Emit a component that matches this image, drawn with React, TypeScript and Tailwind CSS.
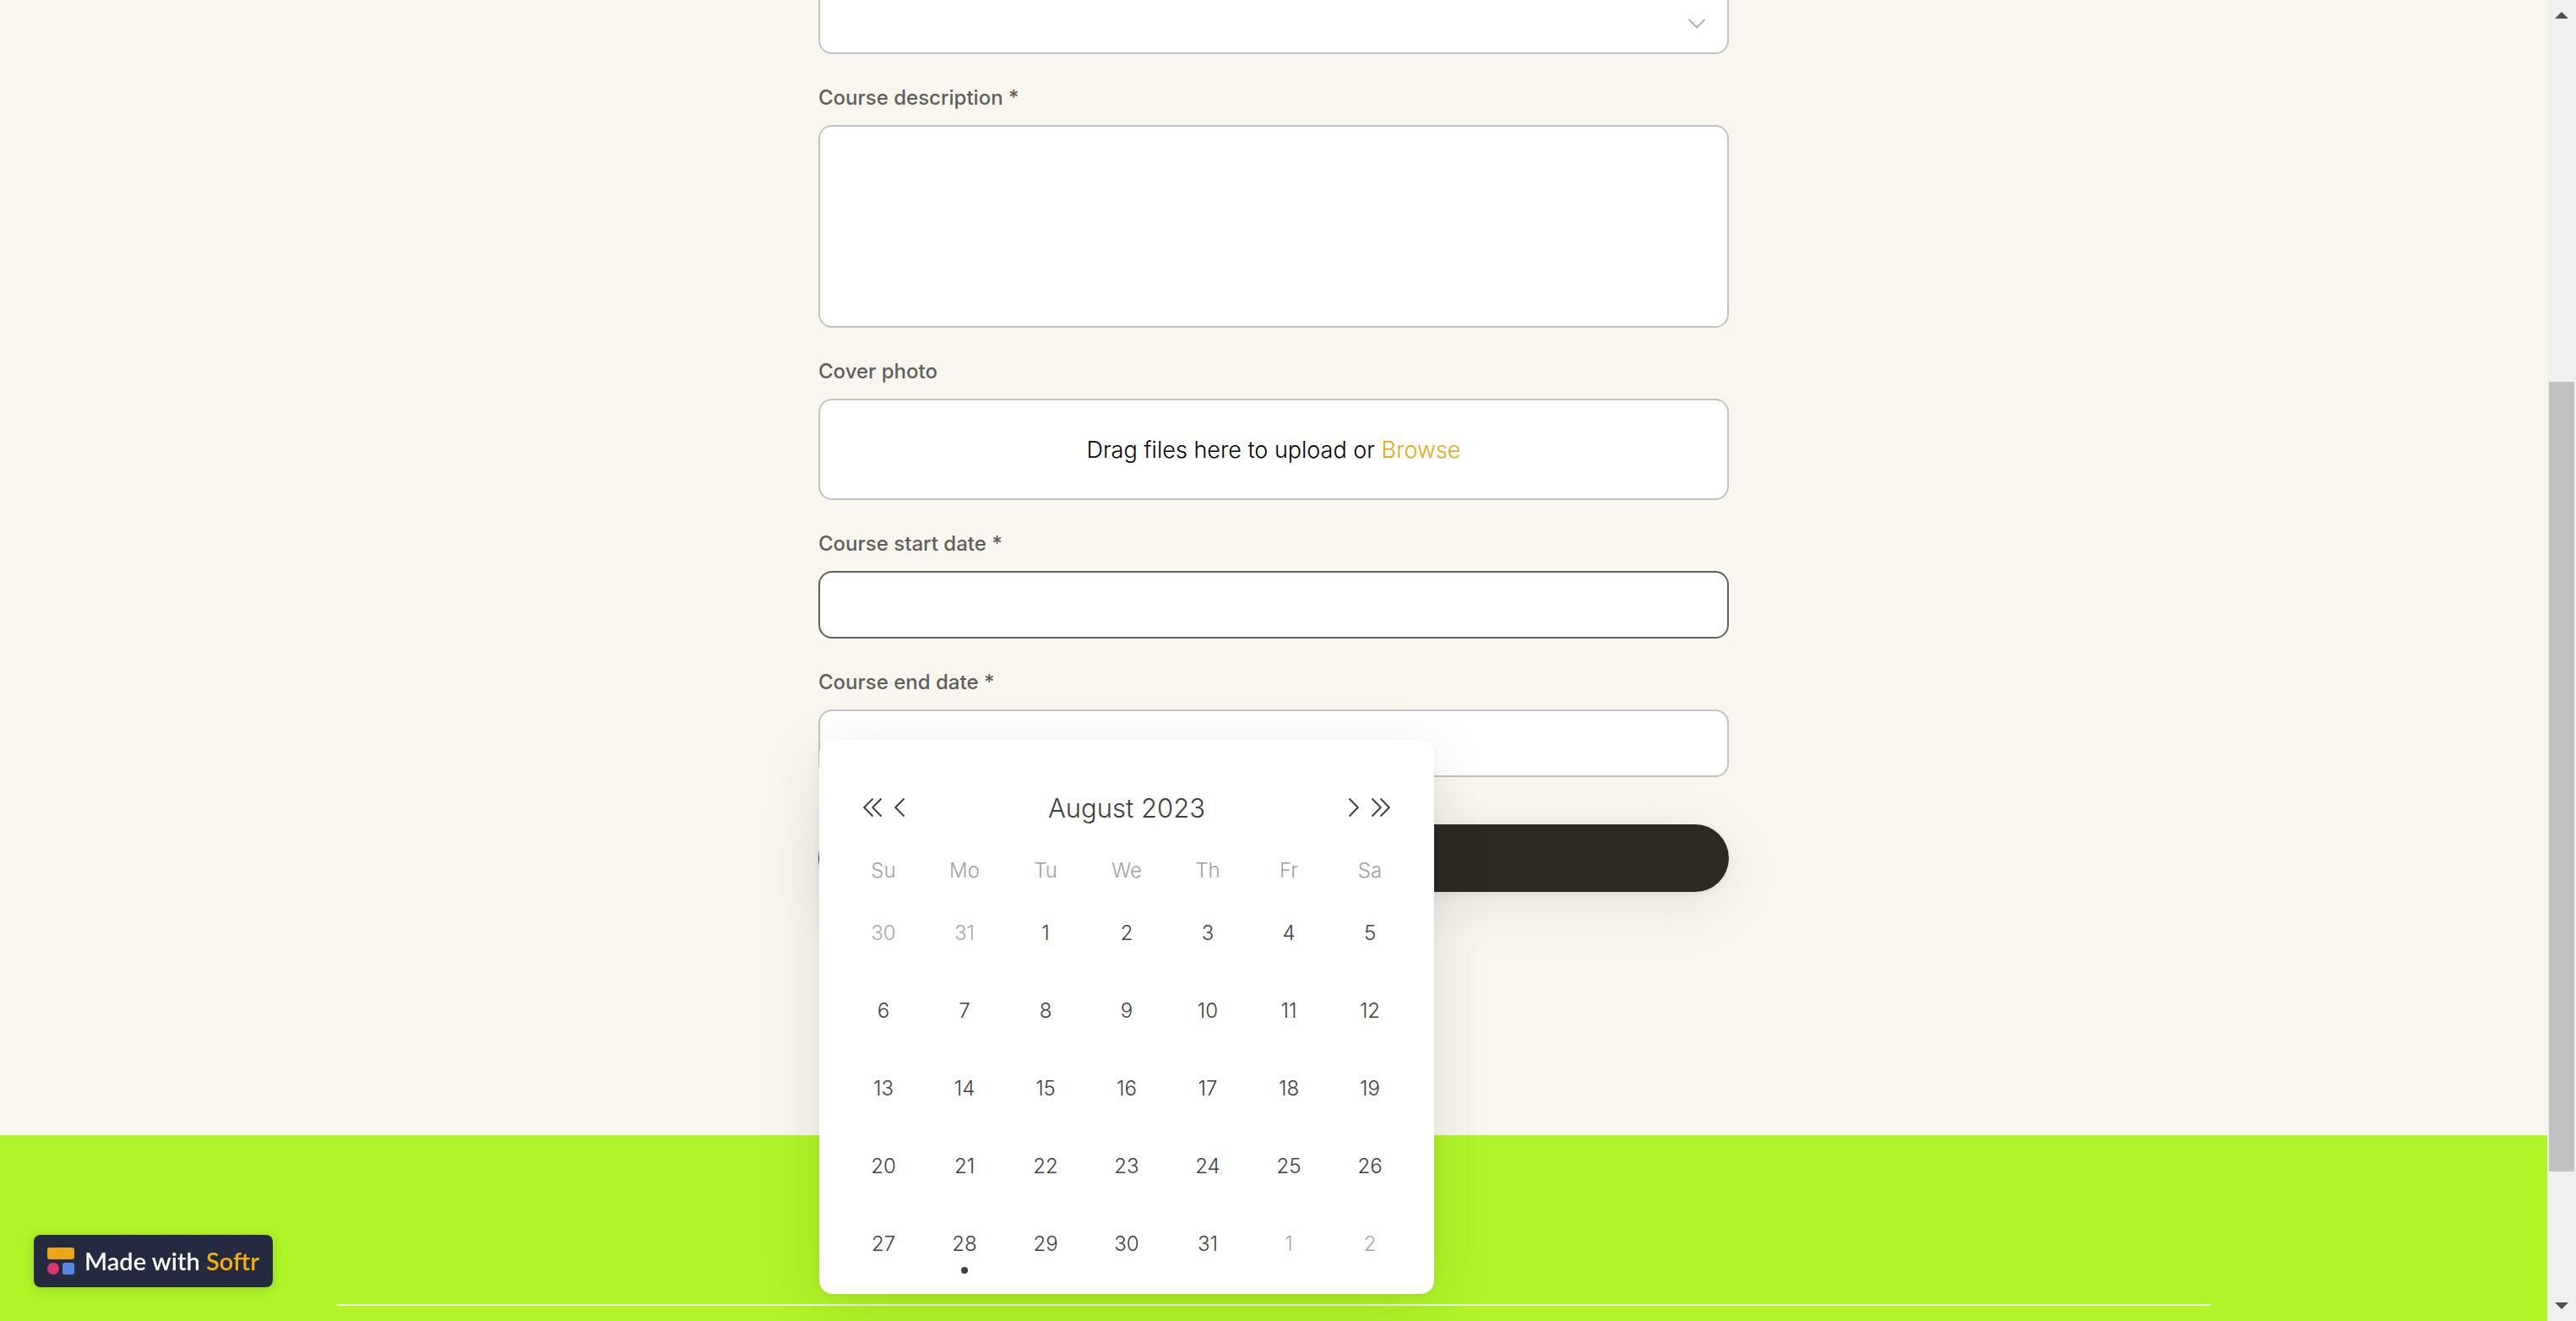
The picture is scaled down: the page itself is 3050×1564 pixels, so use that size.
import React from "react";

const WEEKDAYS = ["Su", "Mo", "Tu", "We", "Th", "Fr", "Sa"];
const WEEKS = [
  [30, 31, 1, 2, 3, 4, 5],
  [6, 7, 8, 9, 10, 11, 12],
  [13, 14, 15, 16, 17, 18, 19],
  [20, 21, 22, 23, 24, 25, 26],
  [27, 28, 29, 30, 31, 1, 2],
];
const TODAY = 28;

const boxStyle = "block w-full rounded-2xl border-2 bg-white outline-none";

function Field({ id, label, children }: { id: string; label: string; children: React.ReactNode }) {
  return (
    <div className="relative pt-8">
      <label htmlFor={id} className="mb-3 block text-2xl leading-10 font-medium text-[#5f5f5f]">
        {label}
      </label>
      {children}
    </div>
  );
}

function Chevrons({ double, right }: { double?: boolean; right?: boolean }) {
  const width = double ? 22 : 12;
  return (
    <svg
      width={width}
      height="22"
      viewBox={`0 0 ${width} 22`}
      fill="none"
      stroke="#404040"
      strokeWidth="2"
      className={right ? "rotate-180" : ""}
      aria-hidden="true"
    >
      <path d="M11.5 0.5 1.2 11l10.3 10.5" />
      {double && <path d="M21.5 0.5 11.2 11l10.3 10.5" />}
    </svg>
  );
}

function Calendar() {
  return (
    <div
      role="dialog"
      aria-label="Choose date"
      className="absolute top-[284px] left-px z-10 w-[728px] rounded-2xl bg-white px-7 pt-[34px] pb-[14px] text-[#404040] shadow-[0_16px_72px_rgba(0,0,0,0.1),0_2px_10px_rgba(0,0,0,0.04)]"
    >
      <div className="flex h-[92px] items-center justify-between px-6">
        <div className="flex gap-[15px]">
          <button type="button" aria-label="Previous year"><Chevrons double /></button>
          <button type="button" aria-label="Previous month"><Chevrons /></button>
        </div>
        <h2 className="pt-0.5 text-[31px] leading-10 font-light">August 2023</h2>
        <div className="flex gap-[15px]">
          <button type="button" aria-label="Next month"><Chevrons right /></button>
          <button type="button" aria-label="Next year"><Chevrons double right /></button>
        </div>
      </div>
      <table className="w-full table-fixed border-collapse text-center text-2xl">
        <thead>
          <tr className="h-14 text-[#a0a0a0]">
            {WEEKDAYS.map((d) => (
              <th key={d} scope="col" className="p-0 pt-0.5 font-light">{d}</th>
            ))}
          </tr>
        </thead>
        <tbody>
          {WEEKS.map((week, w) => (
            <tr key={w} className="h-[92px]">
              {week.map((day) => {
                const outside = (w === 0 && day > 7) || (w === 4 && day < 7);
                return (
                  <td key={day} className="p-0">
                    <button
                      type="button"
                      className={`relative h-[92px] w-full pt-0.5 align-top font-light ${outside ? "text-[#a9a9ad]" : ""}`}
                    >
                      {day}
                      {day === TODAY && (
                        <span className="absolute bottom-[10px] left-1/2 size-2 -translate-x-1/2 rounded-full bg-[#404040]" />
                      )}
                    </button>
                  </td>
                );
              })}
            </tr>
          ))}
        </tbody>
      </table>
    </div>
  );
}

function ScrollBar() {
  return (
    <div className="flex w-[34px] shrink-0 flex-col items-center justify-between bg-[#f0f0f0] py-[14px]" aria-hidden="true">
      <svg width="16" height="8" viewBox="0 0 16 8"><path d="M8 0l8 8H0z" fill="#505050" /></svg>
      <div className="flex w-full flex-1 flex-col px-0.5 py-3">
        <div className="grow-[418] basis-0" />
        <div className="grow-[935] basis-0 bg-[#c1c1c1]" />
        <div className="grow-[143] basis-0" />
      </div>
      <svg width="16" height="8" viewBox="0 0 16 8"><path d="M0 0h16L8 8z" fill="#505050" /></svg>
    </div>
  );
}

export default function App() {
  return (
    <div className="flex h-screen overflow-hidden bg-[#f9f6ee] font-['Inter',sans-serif]">
      <div className="flex min-w-0 flex-1 flex-col overflow-hidden">
        <main className="shrink-0 px-6 pb-72">
          <form className="mx-auto -mt-4 w-full max-w-[1078px]" onSubmit={(e) => e.preventDefault()}>
            <div className="relative">
              <select aria-label="Course category" className={`${boxStyle} h-20 appearance-none border-[#c2c2c2]`} />
              <svg width="20" height="12" viewBox="0 0 20 12" fill="none" stroke="#999" strokeWidth="1.5" className="pointer-events-none absolute top-[38px] right-7" aria-hidden="true">
                <path d="M.5 1 10 10.500 19.500 1" />
              </svg>
            </div>
            <Field id="description" label="Course description *">
              <textarea id="description" className={`${boxStyle} h-60 resize-none border-[#c2c2c2]`} />
            </Field>
            <Field id="cover" label="Cover photo">
              <div className={`${boxStyle} flex h-[120px] items-center justify-center border-[#c2c2c2] pt-0.5 text-[27px] leading-9 font-light text-black`}>
                <span>
                  Drag files here to upload or{" "}
                  <button type="button" id="cover" className="text-[#dfab0c]">Browse</button>
                </span>
              </div>
            </Field>
            <Field id="start" label="Course start date *">
              <input id="start" type="text" className={`${boxStyle} h-20 border-[#606060]`} />
              <Calendar />
            </Field>
            <Field id="end" label="Course end date *">
              <input id="end" type="text" className={`${boxStyle} h-20 border-[#c2c2c2]`} />
            </Field>
            <button
              type="submit"
              aria-label="Submit"
              className="mt-14 block h-20 w-full rounded-full bg-[#2d2a24] shadow-[0_16px_72px_rgba(0,0,0,0.08),0_2px_10px_rgba(0,0,0,0.06)]"
            />
          </form>
        </main>
        <footer className="flex-1 bg-[#b1f427] px-6 pt-[200px]">
          <hr className="mx-auto max-w-[2220px] border-t-2 border-[#efefef]" />
        </footer>
      </div>
      <a
        href="#softr"
        className="fixed bottom-10 left-10 flex h-[62px] items-center gap-3 rounded-lg bg-[#242b40] px-4 font-['Lato',sans-serif] text-[29px] leading-9 font-semibold text-white shadow-[0_2px_14px_rgba(0,0,0,0.15)]"
      >
        <svg width="32" height="32" viewBox="0 0 32 32" aria-hidden="true">
          <rect width="32" height="14" rx="2.500" fill="#eda51a" />
          <circle cx="7" cy="25" r="7" fill="#dc376c" />
          <rect x="18" y="18" width="14" height="14" rx="2.500" fill="#5887df" />
        </svg>
        <span>
          Made with <span className="text-[#f5b000]">Softr</span>
        </span>
      </a>
      <ScrollBar />
    </div>
  );
}
